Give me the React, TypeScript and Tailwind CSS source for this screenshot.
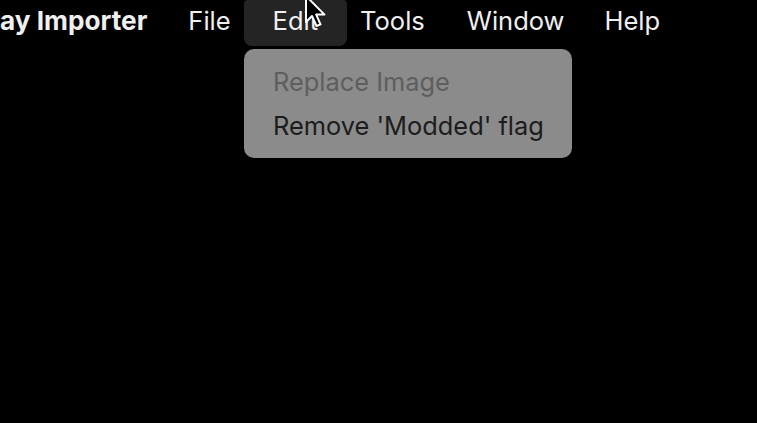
import React from 'react';

const font = { fontFamily: 'Inter, "Noto Sans", sans-serif' };

export default function App() {
  return (
    <div className="relative h-[423px] w-[757px] overflow-hidden bg-black text-[#efefef]" style={font}>
      {/* Menu bar */}
      <div className="flex h-[46px] items-center whitespace-nowrap text-[25.5px] leading-none">
        <span className="pr-[20px] pb-[4px] text-[26.2px] font-bold">ay Importer</span>
        <span className="px-[21px] pb-[4px]">File</span>
        <span className="-mx-[8px] flex h-[46px] items-center rounded-b-[8px] rounded-t-[4px] bg-[#242424] px-[29px] pb-[4px]">Edit</span>
        <span className="px-[21px] pb-[4px]">Tools</span>
        <span className="px-[21px] pb-[4px]">Window</span>
        <span className="pl-[19px] pb-[4px]">Help</span>
      </div>

      {/* Edit dropdown */}
      <div className="absolute left-[244px] top-[49px] flex w-[328px] flex-col gap-[19px] whitespace-nowrap rounded-[10px] bg-[#8b8b8b] pl-[29px] pb-[19px] pt-[20px] text-[25.4px] leading-none">
        <span className="text-[#5e5e5e]">Replace Image</span>
        <span className="text-[#1c1c1c]">Remove 'Modded' flag</span>
      </div>

      {/* Pointer */}
      <svg className="absolute left-[303px] top-[-6px]" width="26" height="38" viewBox="0 0 26 38">
        <path
          d="M3 2 L3 28 L9 22 L13.5 32 L17.5 30.3 L13.2 20.6 L21.5 20.6 Z"
          fill="#000"
          stroke="#fff"
          strokeWidth="2"
          strokeLinejoin="round"
        />
      </svg>
    </div>
  );
}
